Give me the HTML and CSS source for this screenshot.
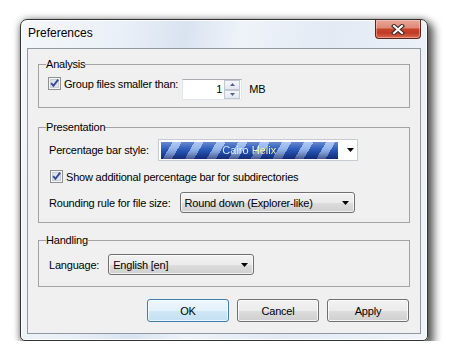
FILE: index.html
```html
<!DOCTYPE html>
<html lang="en">
<head>
<meta charset="utf-8">
<title>Preferences</title>
<link rel="stylesheet" href="styles.css">
</head>
<body>
<div class="window">
  <div class="titlebar">
    <span class="title">Preferences</span>
    <button class="close" aria-label="Close">
      <svg width="14" height="11" viewBox="0 0 14 11"><path d="M3 2 L11 9 M11 2 L3 9" stroke="#3a2a28" stroke-width="4.2" stroke-linecap="square" fill="none"/><path d="M3 2 L11 9 M11 2 L3 9" stroke="#ffffff" stroke-width="2" stroke-linecap="square" fill="none"/></svg>
    </button>
  </div>
  <div class="client">
    <fieldset class="group">
      <legend>Analysis</legend>
      <div class="gbody g-analysis">
        <div class="row row-top">
          <label class="check">
            <svg class="cb" width="13" height="13" viewBox="0 0 13 13"><rect x="0.5" y="0.5" width="12" height="12" fill="#f6f6f6" stroke="#8e8f8f"/><rect x="2.5" y="2.5" width="8" height="8" fill="#dfe3ec" stroke="#c9cdd6"/><path d="M3.2 6.2 L5.4 8.8 L10.2 2.6" fill="none" stroke="#33489a" stroke-width="1.9"/></svg>
            <span>Group files smaller than:</span>
          </label>
          <div class="spin">
            <span class="spin-val">1</span>
            <span class="spin-btns">
              <span class="sb"><svg width="5" height="3" viewBox="0 0 5 3"><path d="M0 3 L2.5 0 L5 3 Z" fill="#4d6296"/></svg></span>
              <span class="sb"><svg width="5" height="3" viewBox="0 0 5 3"><path d="M0 0 L2.5 3 L5 0 Z" fill="#4d6296"/></svg></span>
            </span>
          </div>
          <span class="unit">MB</span>
        </div>
      </div>
    </fieldset>

    <fieldset class="group g-gap1">
      <legend>Presentation</legend>
      <div class="gbody g-presentation">
        <div class="row">
          <span class="lbl">Percentage bar style:</span>
          <div class="barcombo">
            <div class="bar"><span class="bar-text">Cairo Helix</span></div>
            <span class="bar-arrow"><svg width="7" height="4" viewBox="0 0 7 4"><path d="M0 0 L7 0 L3.5 4 Z" fill="#000"/></svg></span>
          </div>
        </div>
        <div class="row row-check">
          <label class="check check-indent">
            <svg class="cb" width="13" height="13" viewBox="0 0 13 13"><rect x="0.5" y="0.5" width="12" height="12" fill="#f6f6f6" stroke="#8e8f8f"/><rect x="2.5" y="2.5" width="8" height="8" fill="#dfe3ec" stroke="#c9cdd6"/><path d="M3.2 6.2 L5.4 8.8 L10.2 2.6" fill="none" stroke="#33489a" stroke-width="1.9"/></svg>
            <span>Show additional percentage bar for subdirectories</span>
          </label>
        </div>
        <div class="row row-round">
          <span class="lbl">Rounding rule for file size:</span>
          <div class="combo combo-round">
            <span>Round down (Explorer-like)</span>
            <svg width="7" height="4" viewBox="0 0 7 4"><path d="M0 0 L7 0 L3.5 4 Z" fill="#000"/></svg>
          </div>
        </div>
      </div>
    </fieldset>

    <fieldset class="group g-gap2">
      <legend>Handling</legend>
      <div class="gbody g-handling">
        <div class="row">
          <span class="lbl">Language:</span>
          <div class="combo combo-lang">
            <span>English [en]</span>
            <svg width="7" height="4" viewBox="0 0 7 4"><path d="M0 0 L7 0 L3.5 4 Z" fill="#000"/></svg>
          </div>
        </div>
      </div>
    </fieldset>

    <div class="buttons">
      <button class="btn btn-default">OK</button>
      <button class="btn">Cancel</button>
      <button class="btn">Apply</button>
    </div>
  </div>
</div>
</body>
</html>
```
FILE: styles.css
```css
* { box-sizing: border-box; }

html, body {
  margin: 0;
  padding: 0;
  background: #ffffff;
}

body {
  padding: 19px 0 0 20px;
  font-family: "Liberation Sans", Arial, sans-serif;
  font-size: 11px;
  letter-spacing: -0.2px;
  color: #000;
}

.window {
  width: 408px;
  height: 322px;
  border: 1px solid #333333;
  border-radius: 7px 7px 5px 5px;
  padding: 0 6px 6px;
  display: flex;
  flex-direction: column;
  background: linear-gradient(100deg, #f4f7fb 0%, #eaf0f7 22%, #d9e3f0 36%, #eff3f9 48%, #e3eaf4 68%, #f1f5fa 100%);
  box-shadow: inset 0 0 0 1px rgba(255,255,255,0.85), 0 0 7px rgba(0,0,0,0.3), 4px 5px 9px 2px rgba(0,0,0,0.6);
}

.titlebar {
  height: 28px;
  display: flex;
  justify-content: space-between;
  align-items: flex-start;
  padding-left: 1px;
}

.title {
  padding-top: 6px;
  font-size: 12px;
  line-height: 15px;
  letter-spacing: 0;
  text-shadow: 0 0 6px rgba(255,255,255,0.95);
}

.close {
  width: 46px;
  height: 19px;
  padding: 0;
  margin: 0;
  border: 1px solid #5a2418;
  border-top: none;
  border-radius: 0 0 4px 4px;
  display: flex;
  align-items: center;
  justify-content: center;
  background: linear-gradient(#e9a797 0%, #dd8c78 42%, #c7432a 52%, #c23a26 72%, #d86a4d 100%);
  box-shadow: inset 0 0 0 1px rgba(255,220,210,0.45);
}

.client {
  flex: 1;
  border: 1px solid #8f98a3;
  background: #f0f0f0;
  padding: 9px 10px 11px;
  display: flex;
  flex-direction: column;
}

.group {
  margin: 0;
  padding: 0;
  min-width: 0;
  border: 1px solid #a2a2a2;
}

.group legend {
  padding: 0;
  margin-left: 7px;
  line-height: 13px;
}

.g-gap1 { margin-top: 13px; }
.g-gap2 { margin-top: 11px; }

.g-analysis { padding: 6px 9px 7px; }
.g-presentation { padding: 5px 10px 9px; }
.g-handling { padding: 7px 10px 11px; }

.row {
  display: flex;
  align-items: center;
}

.row-top { align-items: flex-start; }

.check {
  display: flex;
  align-items: center;
  gap: 3px;
  height: 13px;
}

.check .cb { flex: none; display: block; }
.check-indent { margin-left: 1px; }

.row-check { margin-top: 9px; height: 13px; }
.row-round { margin-top: 9px; }

.spin {
  margin-left: 4px;
  margin-top: 2px;
  width: 60px;
  height: 21px;
  display: flex;
  background: #fff;
  border: 1px solid #e2e7ee;
  border-top-color: #abadb3;
}

.spin-val {
  flex: 1;
  text-align: right;
  line-height: 19px;
  padding-right: 2px;
}

.spin-btns {
  width: 16px;
  margin: 0 1px 0 0;
  display: flex;
  flex-direction: column;
}

.sb {
  flex: 1;
  display: flex;
  align-items: center;
  justify-content: center;
  border: 1px solid #c2c8d3;
  background: linear-gradient(#f6f7fa, #e3e7ee);
}

.unit {
  margin-top: 2px;
  margin-left: 7px;
  line-height: 21px;
}

.lbl { flex: none; }

.barcombo {
  margin-left: 9px;
  width: 200px;
  height: 22px;
  display: flex;
  align-items: center;
  background: #fff;
  border: 1px solid #c6cbd2;
  padding: 0 3px 0 2px;
}

.bar {
  width: 177px;
  height: 17px;
  display: flex;
  align-items: center;
  justify-content: center;
  background:
    linear-gradient(to bottom, rgba(255,255,255,0.3) 0%, rgba(255,255,255,0.05) 40%, rgba(0,0,40,0.1) 60%, rgba(0,0,50,0.5) 100%),
    repeating-linear-gradient(120deg, #2656b8 0 10px, #8fb1ea 10px 18px, #2656b8 18px 19px);
}

.bar-text {
  letter-spacing: 0;
  background: linear-gradient(90deg, #d0ecff 0%, #f2fcff 45%, #ffff9a 60%, #fff7a0 100%);
  -webkit-background-clip: text;
  background-clip: text;
  color: transparent;
}

.bar-arrow {
  flex: 1;
  display: flex;
  justify-content: flex-end;
  align-items: center;
}

.bar-arrow svg { display: block; }

.combo {
  margin-left: 9px;
  height: 21px;
  display: flex;
  align-items: center;
  justify-content: space-between;
  padding: 0 5px 0 4px;
  border: 1px solid #707070;
  border-radius: 3px;
  background: linear-gradient(#f2f2f2 0%, #ebebeb 50%, #dddddd 51%, #cfcfcf 100%);
  box-shadow: inset 0 0 0 1px rgba(255,255,255,0.7);
}

.combo svg { display: block; flex: none; }

.combo-round { width: 175px; }
.combo-lang { width: 146px; }

.buttons {
  margin-top: 12px;
  display: flex;
  justify-content: flex-end;
  gap: 8px;
  padding-right: 1px;
}

.btn {
  width: 82px;
  height: 23px;
  margin: 0;
  padding: 0;
  font-family: inherit;
  font-size: 11px;
  letter-spacing: -0.2px;
  color: #000;
  border: 1px solid #707070;
  border-radius: 3px;
  background: linear-gradient(#f2f2f2 0%, #ebebeb 50%, #dddddd 51%, #cfcfcf 100%);
  box-shadow: inset 0 0 0 1px rgba(255,255,255,0.8);
}

.btn-default {
  border-color: #3c7fb1;
  background: linear-gradient(#eef7fd 0%, #e2f1fb 50%, #d0e8f6 51%, #c3e0f2 100%);
  box-shadow: inset 0 0 0 1px rgba(255,255,255,0.7);
}
```
